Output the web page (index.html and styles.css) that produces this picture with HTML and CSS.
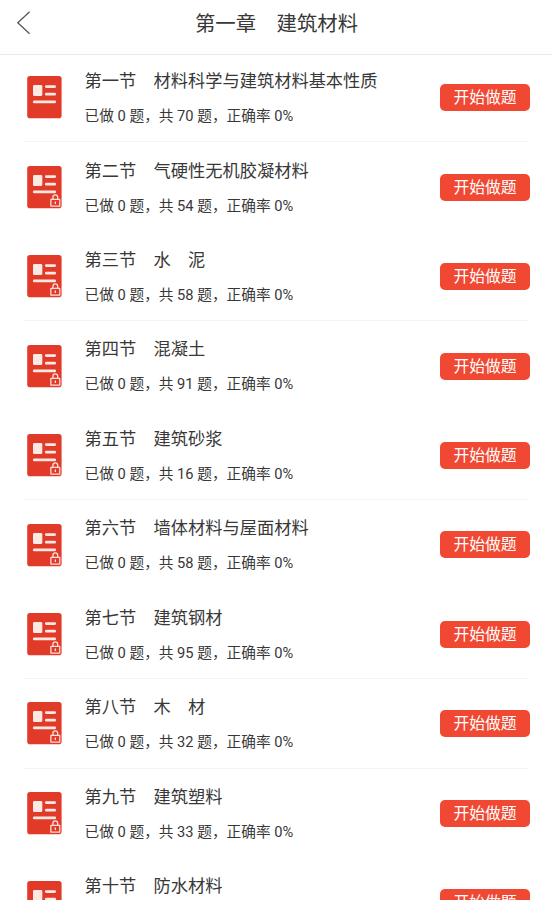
FILE: index.html
```html
<!DOCTYPE html>
<html lang="zh-CN">
<head>
<meta charset="utf-8">
<title>第一章　建筑材料</title>
<link rel="stylesheet" href="styles.css">
</head>
<body>
<svg class="defs" aria-hidden="true">
  <symbol id="book" viewBox="0 0 36 44">
    <rect x="1.2" y="1" width="34.4" height="42.2" rx="2.8" fill="#e13a29"/>
    <rect x="7" y="10" width="9.3" height="11" rx="1.3" fill="#fde9e4"/>
    <path d="M20.3 11.6h8.4M20.3 19.2h8.4M8.3 26.9h20.4" stroke="#fde9e4" stroke-width="2.8" stroke-linecap="round"/>
  </symbol>
  <symbol id="lock" viewBox="0 0 10 12">
    <path d="M2.7 5V3a2.2 2.2 0 0 1 4.4 0V5M.8 5h8.3v6.2H.8zM4.95 7v2.2" fill="none" stroke="#fde0da" stroke-width="1.2" stroke-linejoin="round"/>
  </symbol>
</svg>
<header class="header">
  <svg class="back" viewBox="0 0 14 24"><path d="M13.6 .8L1.8 11.8L13.6 22.8" fill="none" stroke="#555" stroke-width="1.3"/></svg>
  <h1 class="heading">第一章　建筑材料</h1>
</header>
<main class="list" id="list"></main>
<script src="main.js"></script>
</body>
</html>
```
FILE: styles.css
```css
* {
  box-sizing: border-box;
}

body {
  margin: 0;
  height: 900px;
  overflow: hidden;
  background: #fff;
  color: #383838;
  font-family: Roboto, "Noto Sans CJK SC", sans-serif;
}

.defs {
  display: none;
}

.header {
  display: flex;
  align-items: center;
  height: 55px;
  padding: 0 16px 8px;
  border-bottom: 1px solid #e9e9e9;
}

.back {
  flex: none;
  width: 14px;
  height: 24px;
}

.heading {
  flex: 1;
  margin: 0;
  padding: 2px 13px 0 0;
  font-size: 20.4px;
  font-weight: 400;
  line-height: 30px;
  text-align: center;
}

.list {
  padding: 0 22px 0 24px;
}

.row {
  display: flex;
  align-items: center;
  height: 89.45px;
  padding-left: 2px;
}

.row.lined {
  background: linear-gradient(#f3f3f3, #f3f3f3) left bottom 2px / calc(100% - 1px) 1px no-repeat;
}

.icon {
  position: relative;
  flex: none;
  width: 36px;
  height: 44px;
  margin: 0 22.6px 4.8px 0;
}

.book {
  display: block;
  width: 36px;
  height: 44px;
}

.lock {
  position: absolute;
  right: 1px;
  bottom: 2px;
  width: 10.8px;
  height: 13px;
}

.text {
  flex: 1;
  padding-bottom: 4.2px;
  white-space: nowrap;
}

.title {
  margin: 0;
  font-size: 17.24px;
  font-weight: 400;
  line-height: 26px;
}

.stats {
  margin: 11px 0 0;
  font-size: 14.68px;
  line-height: 22px;
}

.start {
  flex: none;
  width: 90px;
  height: 27px;
  margin: 0 0 4px;
  padding: 0;
  border: 0;
  border-radius: 5px;
  background: #f04832;
  color: #fff;
  font: inherit;
  font-size: 15.8px;
  line-height: 27px;
  text-align: center;
}
```
FILE: main.js
```js
const sections = [
  { title: "第一节　材料科学与建筑材料基本性质", total: 70, lined: true, open: true },
  { title: "第二节　气硬性无机胶凝材料", total: 54 },
  { title: "第三节　水　泥", total: 58, lined: true },
  { title: "第四节　混凝土", total: 91 },
  { title: "第五节　建筑砂浆", total: 16, lined: true },
  { title: "第六节　墙体材料与屋面材料", total: 58 },
  { title: "第七节　建筑钢材", total: 95, lined: true },
  { title: "第八节　木　材", total: 32, lined: true },
  { title: "第九节　建筑塑料", total: 33 },
  { title: "第十节　防水材料" }
];

document.getElementById("list").innerHTML = sections.map(s => `
  <section class="row${s.lined ? " lined" : ""}">
    <div class="icon">
      <svg class="book"><use href="#book"/></svg>
      ${s.open ? "" : '<svg class="lock"><use href="#lock"/></svg>'}
    </div>
    <div class="text">
      <h2 class="title">${s.title}</h2>
      <p class="stats">${s.total ? `已做 0 题，共 ${s.total} 题，正确率 0%` : "&nbsp;"}</p>
    </div>
    <button class="start">开始做题</button>
  </section>`).join("");
```
